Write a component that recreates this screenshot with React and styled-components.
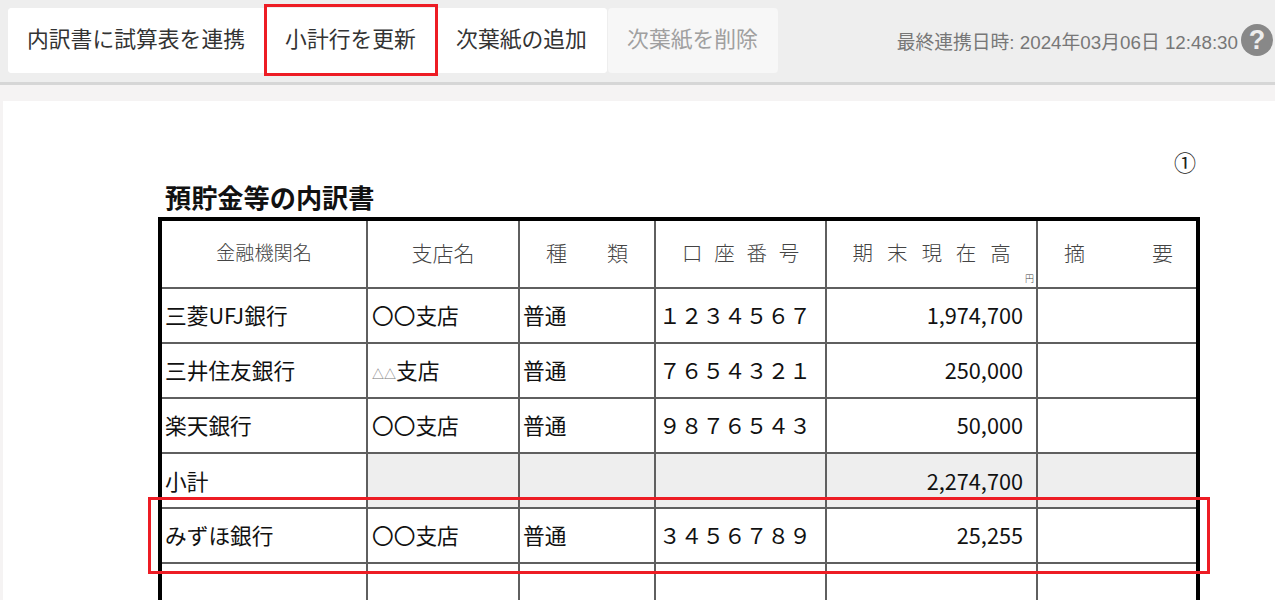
import React from "react";
import styled, { createGlobalStyle } from "styled-components";

const sansJp = `"Noto Sans CJK JP", "Liberation Sans", sans-serif`;
const latinJp = `"Liberation Sans", "Noto Sans CJK JP", sans-serif`;

const GlobalStyle = createGlobalStyle`
  html, body {
    margin: 0;
    height: 600px;
    overflow: hidden;
    background: #f5f3f3;
    font-family: ${sansJp};
  }
`;

const Page = styled.div`
  position: relative;
  width: 1275px;
  height: 600px;
  overflow: hidden;
`;

const Toolbar = styled.header`
  display: flex;
  align-items: flex-start;
  justify-content: space-between;
  box-sizing: border-box;
  height: 85px;
  padding: 8px 2px 0 8px;
  background: #eeeeee;
  border-bottom: 3px solid #d6d6d6;
`;

const ButtonGroup = styled.div`
  display: flex;
  gap: 1px;
`;

const WhiteButtons = styled.div`
  display: flex;
  background: #ffffff;
  border-radius: 4px;
`;

const ToolButton = styled.button`
  box-sizing: border-box;
  height: 65px;
  width: ${(p) => p.$width}px;
  padding: 0 1px 6px 0;
  border: 0;
  border-radius: 4px;
  background: ${(p) => (p.disabled ? "#f7f7f7" : "#ffffff")};
  color: ${(p) => (p.disabled ? "#a0a0a0" : "#333333")};
  font-family: ${sansJp};
  font-size: 21.8px;
`;

const SyncInfo = styled.div`
  display: flex;
  align-items: center;
  gap: 3px;
  height: 64px;
  color: #777777;
  font-family: ${latinJp};
  font-size: 18.8px;
`;

const HelpIcon = styled.span`
  display: flex;
  align-items: center;
  justify-content: center;
  width: 32px;
  height: 32px;
  border-radius: 50%;
  background: #888888;
  color: #eeeeee;
  font-family: "Liberation Sans", sans-serif;
  font-size: 27px;
  font-weight: 700;
`;

const Sheet = styled.main`
  box-sizing: border-box;
  height: 515px;
  margin: 16px 0 0 3px;
  padding: 47px 75px 0 155px;
  background: #ffffff;
`;

const PageNumber = styled.div`
  height: 33px;
  padding-right: 4px;
  color: #222222;
  font-family: "DejaVu Serif", ${sansJp};
  font-size: 22px;
  line-height: 32px;
  text-align: right;
`;

const Title = styled.h1`
  margin: 0;
  padding-left: 7px;
  height: 36px;
  color: #111111;
  font-size: 26.2px;
  font-weight: 700;
  line-height: 32px;
`;

const Table = styled.table`
  box-sizing: border-box;
  width: 1042px;
  table-layout: fixed;
  border-collapse: separate;
  border-spacing: 0;
  border: solid #000000;
  border-width: 4px;
`;

const HeadCell = styled.th`
  position: relative;
  box-sizing: border-box;
  height: 68px;
  padding: 0 0 4px ${(p) => p.$pad || 0}px;
  border-right: 2px solid #5f5f5f;
  border-bottom: 2px solid #5f5f5f;
  color: #444444;
  font-size: ${(p) => p.$size || 21}px;
  font-weight: 300;
  letter-spacing: ${(p) => p.$spacing || 0};
  text-align: center;
  &:last-child {
    border-right: 0;
  }
`;

const SpreadLabel = styled.span`
  display: flex;
  justify-content: space-between;
  padding: 0 ${(p) => p.$right}px 0 ${(p) => p.$left}px;
`;

const Unit = styled.span`
  position: absolute;
  right: 2px;
  bottom: 2px;
  font-size: 9px;
  letter-spacing: 0;
  color: #444444;
`;

const Cell = styled.td`
  box-sizing: border-box;
  height: 55px;
  padding: 0 ${(p) => (p.$right ? "13px" : "0")} ${(p) => (p.$sub ? "0" : "3px")}
    ${(p) => p.$left ?? 3}px;
  border-right: 2px solid #5f5f5f;
  border-bottom: 2px solid #5f5f5f;
  background: ${(p) => (p.$shade ? "#eeeeee" : "#ffffff")};
  color: #111111;
  font-size: 21.7px;
  text-align: ${(p) => (p.$right ? "right" : "left")};
  white-space: nowrap;
  &:last-child {
    border-right: 0;
  }
`;

const Triangles = styled.span`
  color: #777777;
  font-size: 12px;
`;

const Highlight = styled.div`
  position: absolute;
  box-sizing: border-box;
  left: ${(p) => p.$x}px;
  top: ${(p) => p.$y}px;
  width: ${(p) => p.$w}px;
  height: ${(p) => p.$h}px;
  border: 3px solid #ed1c24;
  pointer-events: none;
`;

const rows = [
  { bank: "三菱UFJ銀行", branch: "〇〇支店", type: "普通", no: "１２３４５６７", amount: "1,974,700" },
  { bank: "三井住友銀行", mark: "△△", branch: "支店", type: "普通", no: "７６５４３２１", amount: "250,000" },
  { bank: "楽天銀行", branch: "〇〇支店", type: "普通", no: "９８７６５４３", amount: "50,000" },
  { bank: "小計", amount: "2,274,700", sub: true },
  { bank: "みずほ銀行", branch: "〇〇支店", type: "普通", no: "３４５６７８９", amount: "25,255" },
  { bank: "" }
];

export default function App() {
  return (
    <Page>
      <GlobalStyle />
      <Toolbar>
        <ButtonGroup>
          <WhiteButtons>
            <ToolButton $width={257}>内訳書に試算表を連携</ToolButton>
            <ToolButton $width={172}>小計行を更新</ToolButton>
            <ToolButton $width={170}>次葉紙の追加</ToolButton>
          </WhiteButtons>
          <ToolButton $width={170} disabled>
            次葉紙を削除
          </ToolButton>
        </ButtonGroup>
        <SyncInfo>
          最終連携日時: 2024年03月06日 12:48:30
          <HelpIcon>?</HelpIcon>
        </SyncInfo>
      </Toolbar>
      <Sheet>
        <PageNumber>①</PageNumber>
        <Title>預貯金等の内訳書</Title>
        <Table>
          <colgroup>
            <col style={{ width: 206 }} />
            <col style={{ width: 152 }} />
            <col style={{ width: 136 }} />
            <col style={{ width: 171 }} />
            <col style={{ width: 211 }} />
            <col />
          </colgroup>
          <thead>
            <tr>
              <HeadCell $size={19.2}>金融機関名</HeadCell>
              <HeadCell>支店名</HeadCell>
              <HeadCell>
                <SpreadLabel $left={26} $right={26}>
                  <span>種</span>
                  <span>類</span>
                </SpreadLabel>
              </HeadCell>
              <HeadCell $size={20.5} $spacing="3.6px" $pad={4}>
                口 座 番 号
              </HeadCell>
              <HeadCell $size={20.5} $spacing="4.7px" $pad={5}>
                期 末 現 在 高<Unit>円</Unit>
              </HeadCell>
              <HeadCell>
                <SpreadLabel $left={26} $right={23}>
                  <span>摘</span>
                  <span>要</span>
                </SpreadLabel>
              </HeadCell>
            </tr>
          </thead>
          <tbody>
            {rows.map((r, i) => (
              <tr key={i}>
                <Cell $sub={r.sub}>{r.bank}</Cell>
                <Cell $shade={r.sub} $left={4}>
                  {r.mark && <Triangles>{r.mark}</Triangles>}
                  {r.branch}
                </Cell>
                <Cell $shade={r.sub}>{r.type}</Cell>
                <Cell $shade={r.sub}>{r.no}</Cell>
                <Cell $shade={r.sub} $sub={r.sub} $right>{r.amount}</Cell>
                <Cell $shade={r.sub} />
              </tr>
            ))}
          </tbody>
        </Table>
      </Sheet>
      <Highlight $x={264} $y={4} $w={174} $h={72} />
      <Highlight $x={148} $y={497} $w={1062} $h={77} />
    </Page>
  );
}
